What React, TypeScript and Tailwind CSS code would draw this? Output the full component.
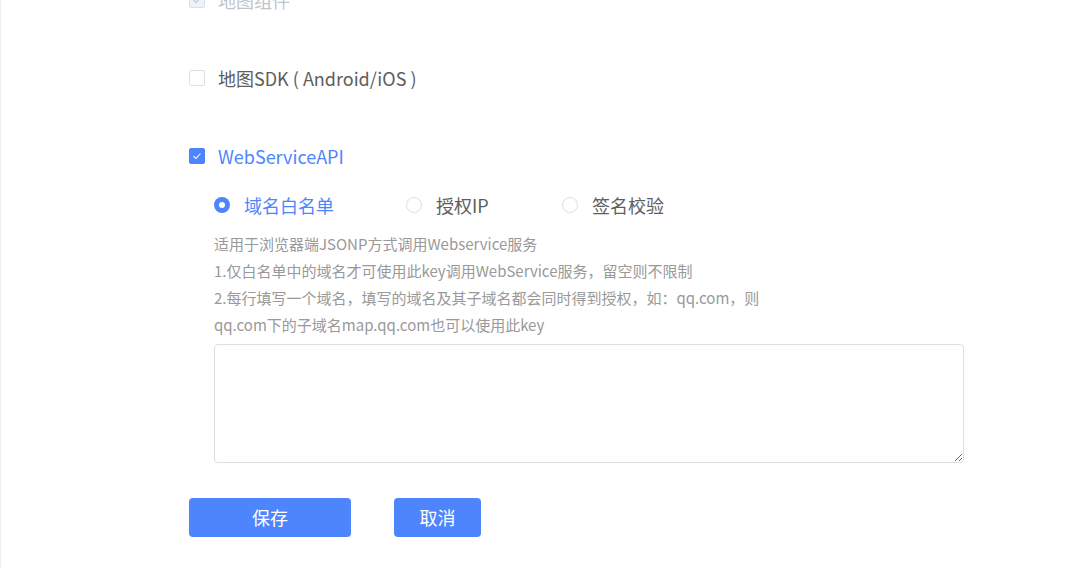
import React from "react";

const font = { fontFamily: '"Noto Sans CJK SC", "Noto Sans", sans-serif' };

function Check({ state }: { state: "off" | "on" | "disabled" }) {
  if (state === "on")
    return (
      <span className="flex h-4 w-4 items-center justify-center rounded-[2px] bg-[#4e85fd] border border-[#4e85fd]">
        <svg width="10" height="8" viewBox="0 0 10 8" fill="none">
          <path d="M1.5 4.2 L4 6.5 L8.5 1.5" stroke="white" strokeWidth="1.1" />
        </svg>
      </span>
    );
  if (state === "disabled")
    return (
      <span className="flex h-4 w-4 items-center justify-center rounded-[2px] bg-[#edf2fc] border border-[#dcdfe6]">
        <svg width="10" height="8" viewBox="0 0 10 8" fill="none">
          <path d="M1.5 4.2 L4 6.5 L8.5 1.5" stroke="#c0c4cc" strokeWidth="1.1" />
        </svg>
      </span>
    );
  return <span className="block h-4 w-4 rounded-[2px] bg-white border border-[#dcdfe6]" />;
}

function Radio({ on }: { on?: boolean }) {
  return on ? (
    <span className="flex h-4 w-4 items-center justify-center rounded-full bg-[#4e85fd]">
      <span className="block h-[6px] w-[6px] rounded-full bg-white" />
    </span>
  ) : (
    <span className="block h-4 w-4 rounded-full border border-[#dcdfe6] bg-white" />
  );
}

export default function App() {
  return (
    <div className="h-[568px] w-[1090px] overflow-hidden bg-white border-l border-[#ebeef5]" style={font}>
      <div className="pl-[188px] -mt-3 flex flex-col">
        <div className="flex h-6 items-center gap-[13px]">
          <Check state="disabled" />
          <span className="text-[18px] leading-6 text-[#c0c4cc]">地图组件</span>
        </div>
        <div className="mt-[54px] flex h-6 items-center gap-[13px]">
          <Check state="off" />
          <span className="text-[18px] leading-6 text-[#5e5e5e]">地图SDK ( Android/iOS )</span>
        </div>
        <div className="mt-[54px] flex h-6 items-center gap-[13px]">
          <Check state="on" />
          <span className="text-[18px] leading-6 text-[#4e85fd]">WebServiceAPI</span>
        </div>
        <div className="pl-[25px] flex flex-col">
          <div className="mt-[25px] flex h-6 items-center">
            <div className="flex w-[192px] items-center gap-[14px]">
              <Radio on />
              <span className="text-[18px] leading-6 text-[#4e85fd]">域名白名单</span>
            </div>
            <div className="flex w-[156px] items-center gap-[14px]">
              <Radio />
              <span className="text-[18px] leading-6 text-[#5e5e5e]">授权IP</span>
            </div>
            <div className="flex items-center gap-[14px]">
              <Radio />
              <span className="text-[18px] leading-6 text-[#5e5e5e]">签名校验</span>
            </div>
          </div>
          <div className="mt-[13px] text-[15px] leading-[27px] text-[#999999] whitespace-nowrap">
            <div>适用于浏览器端JSONP方式调用Webservice服务</div>
            <div>1.仅白名单中的域名才可使用此key调用WebService服务，留空则不限制</div>
            <div>2.每行填写一个域名，填写的域名及其子域名都会同时得到授权，如：qq.com，则</div>
            <div>qq.com下的子域名map.qq.com也可以使用此key</div>
          </div>
          <textarea className="mt-[6px] block h-[119px] w-[750px] rounded-[4px] border border-[#dcdfe6] outline-none resize-y" />
        </div>
        <div className="mt-[35px] flex gap-[43px]">
          <button className="h-[39px] w-[162px] rounded-[4px] bg-[#4e85fd] text-[18px] text-white">保存</button>
          <button className="h-[39px] w-[87px] rounded-[4px] bg-[#4e85fd] text-[18px] text-white">取消</button>
        </div>
      </div>
    </div>
  );
}
